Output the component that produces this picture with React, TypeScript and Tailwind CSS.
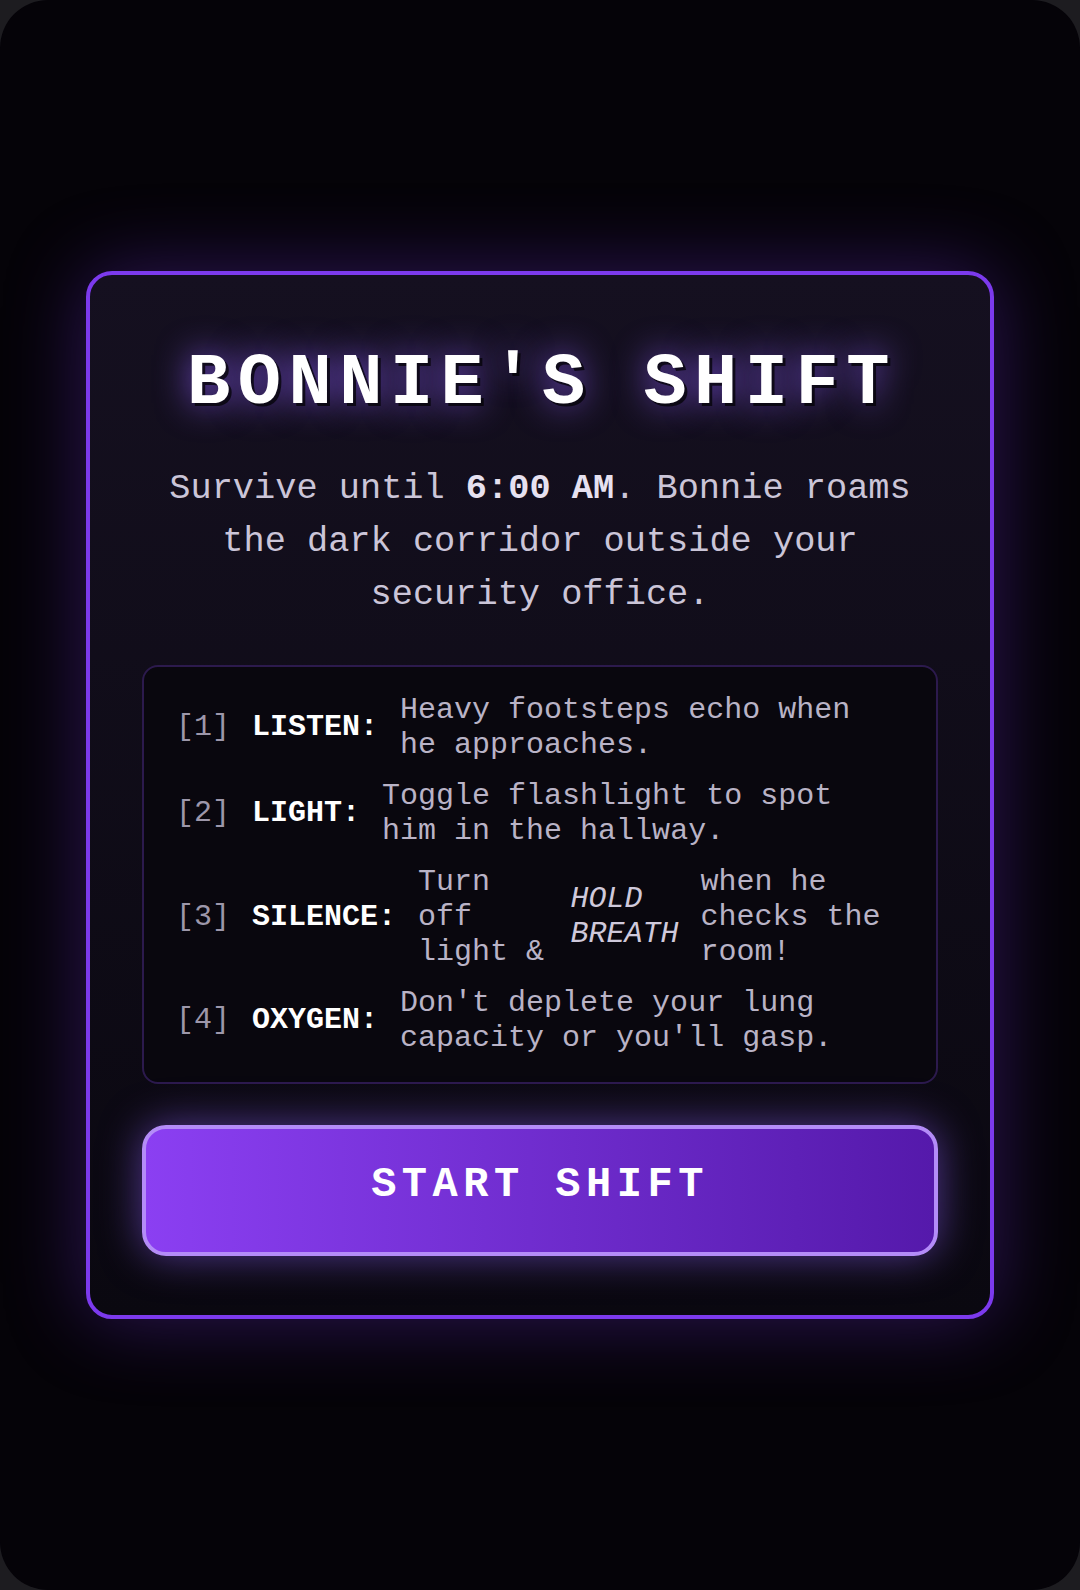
const mono = "font-['Liberation_Mono','Courier_New',monospace]";

type Rule = { key: string; label: string; body: React.ReactNode };

const rules: Rule[] = [
  { key: '1', label: 'LISTEN:', body: 'Heavy footsteps echo when he approaches.' },
  { key: '2', label: 'LIGHT:', body: 'Toggle flashlight to spot him in the hallway.' },
  {
    key: '3',
    label: 'SILENCE:',
    body: (
      <>
        {'Turn off light & '}
        <em className="italic text-[#cfc9db]">HOLD BREATH</em>
        {' when he checks the room!'}
      </>
    ),
  },
  { key: '4', label: 'OXYGEN:', body: "Don't deplete your lung capacity or you'll gasp." },
];

export default function App() {
  return (
    <div className="min-h-screen bg-[#1d1c20]">
      <div
        className={`flex h-[1590px] w-[1080px] items-center justify-center rounded-[48px] bg-[#050308] ${mono}`}
      >
        <div className="w-[908px] rounded-[26px] border-4 border-[#7c3aed] bg-linear-to-b from-[#151020] to-[#0a0810] px-[52px] pt-[73px] pb-[59px] shadow-[0_0_80px_rgba(124,58,237,0.35)]">
          <h1 className="pl-[4px] text-center text-[72px] leading-none font-bold tracking-[7.5px] text-white [text-shadow:3px_3px_0_rgba(0,0,0,0.7),0_0_34px_rgba(139,92,246,0.9)]">
            BONNIE'S SHIFT
          </h1>

          <p className="mt-[43px] text-center text-[35.3px] leading-[52.7px] text-[#cbc5d8]">
            Survive until <strong className="font-bold text-[#e6e1f0]">6:00 AM</strong>. Bonnie roams the dark
            corridor outside your security office.
          </p>

          <div className="mt-[43px] rounded-[16px] border-2 border-[#2c1a4d] bg-[#09070e] py-[26px] pr-[40px] pl-[32px]">
            <ul className="flex flex-col gap-[16px] text-[30px] leading-[35px] text-[#b9b3c6]">
              {rules.map((r) => (
                <li key={r.key} className="flex items-center gap-[22px]">
                  <span className="text-[#9d97aa]">[{r.key}]</span>
                  <span className="font-bold text-white">{r.label}</span>
                  {r.body}
                </li>
              ))}
            </ul>
          </div>

          <button className="mt-[41px] flex h-[131px] w-full items-center justify-center rounded-[24px] border-4 border-[#b48cf8] bg-linear-to-r from-[#8b3ff2] to-[#5519ab] pb-[10px] text-[42px] font-bold tracking-[5.5px] text-white shadow-[0_0_40px_rgba(139,92,246,0.55)]">
            START SHIFT
          </button>
        </div>
      </div>
    </div>
  );
}
